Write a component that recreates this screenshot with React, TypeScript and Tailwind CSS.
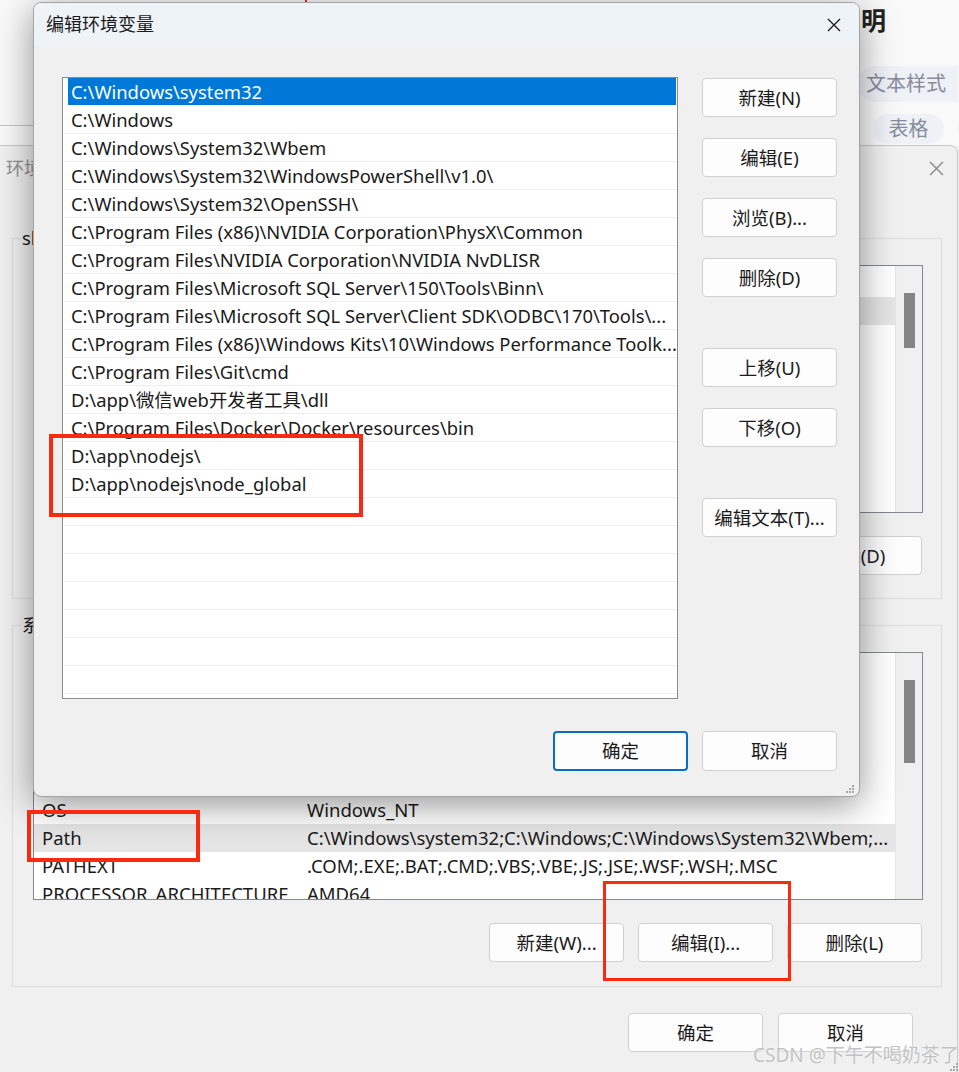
import React from "react";

const dialogPaths = [
  "C:\\Windows\\system32",
  "C:\\Windows",
  "C:\\Windows\\System32\\Wbem",
  "C:\\Windows\\System32\\WindowsPowerShell\\v1.0\\",
  "C:\\Windows\\System32\\OpenSSH\\",
  "C:\\Program Files (x86)\\NVIDIA Corporation\\PhysX\\Common",
  "C:\\Program Files\\NVIDIA Corporation\\NVIDIA NvDLISR",
  "C:\\Program Files\\Microsoft SQL Server\\150\\Tools\\Binn\\",
  "C:\\Program Files\\Microsoft SQL Server\\Client SDK\\ODBC\\170\\Tools\\...",
  "C:\\Program Files (x86)\\Windows Kits\\10\\Windows Performance Toolk...",
  "C:\\Program Files\\Git\\cmd",
  "D:\\app\\微信web开发者工具\\dll",
  "C:\\Program Files\\Docker\\Docker\\resources\\bin",
  "D:\\app\\nodejs\\",
  "D:\\app\\nodejs\\node_global",
];

const userVars = [
  { name: "OneDrive", value: "C:\\Users\\shao\\OneDrive" },
  { name: "Path", value: "C:\\Users\\shao\\AppData" },
  { name: "TEMP", value: "C:\\Users\\shao\\AppData" },
  { name: "TMP", value: "C:\\Users\\shao\\AppData" },
];

const systemVars = [
  { name: "ComSpec", value: "C:\\Windows\\system32\\cmd.exe" },
  { name: "DriverData", value: "C:\\Windows\\System32\\Drivers" },
  { name: "JAVA_HOME", value: "D:\\app\\jdk" },
  { name: "NUMBER_OF_PROCESSORS", value: "16" },
  { name: "OS", value: "Windows_NT" },
  { name: "Path", value: "C:\\Windows\\system32;C:\\Windows;C:\\Windows\\System32\\Wbem;..." },
  { name: "PATHEXT", value: ".COM;.EXE;.BAT;.CMD;.VBS;.VBE;.JS;.JSE;.WSF;.WSH;.MSC" },
  { name: "PROCESSOR_ARCHITECTURE", value: "AMD64" },
];

const CloseX = ({ color, size }: { color: string; size: number }) => (
  <svg width={size} height={size} viewBox="0 0 14 14">
    <path d="M1 1 L13 13 M13 1 L1 13" stroke={color} strokeWidth="1.3" fill="none" />
  </svg>
);

const Grip = () => (
  <svg width="10" height="10" viewBox="0 0 10 10" fill="#a8a8a8">
    <rect x="7" y="1" width="2" height="2" />
    <rect x="4" y="4" width="2" height="2" />
    <rect x="7" y="4" width="2" height="2" />
    <rect x="1" y="7" width="2" height="2" />
    <rect x="4" y="7" width="2" height="2" />
    <rect x="7" y="7" width="2" height="2" />
  </svg>
);

const Btn = ({ label, primary, className = "" }: { label: string; primary?: boolean; className?: string }) => (
  <div
    className={`flex h-[39px] w-[135px] shrink-0 items-center justify-center rounded-[4px] bg-[#fdfdfd] text-[18.5px] text-[#1b1b1b] ${
      primary ? "border-2 border-[#0a6cc4]" : "border border-[#d0d0d0]"
    } ${className}`}
  >
    {label}
  </div>
);

const VarList = ({
  rows,
  selected,
  thumbH,
}: {
  rows: { name: string; value: string }[];
  selected: number;
  thumbH: string;
}) => (
  <div className="flex h-[248px] w-[890px] overflow-hidden border border-[#828790] bg-white">
    <div className="flex min-w-0 flex-1 flex-col">
      <div className="flex h-[31px] shrink-0 items-center text-[18.5px] text-[#333]">
        <span className="w-[273px] pl-[8px]">变量</span>
        <span>值</span>
      </div>
      {rows.map((r, i) => (
        <div
          key={i}
          className={`flex h-[28px] shrink-0 items-center whitespace-nowrap text-[18.5px] ${
            i === selected ? "bg-[#e5e5e5]" : ""
          }`}
        >
          <span className="w-[273px] shrink-0 overflow-hidden pl-[8px]">{r.name}</span>
          <span className="overflow-hidden">{r.value}</span>
        </div>
      ))}
    </div>
    <div className="flex w-[27px] shrink-0 justify-center border-l border-[#e6e6e6] bg-[#f0f0f0] pt-[27px]">
      <div className={`w-[11px] bg-[#858585] ${thumbH}`} />
    </div>
  </div>
);

export default function App() {
  return (
    <div className="relative h-[1072px] w-[959px] overflow-hidden bg-[#f0f0f0] font-['Noto_Sans','Noto_Sans_CJK_SC',sans-serif] text-[#1a1a1a]">
      {/* web page behind */}
      <div className="flex h-[146px] bg-[#f9f9f9]">
        <div className="flex w-[858px] shrink-0 flex-col">
          <div className="ml-[305px] h-[5px] w-[2px] bg-[#e8281c]" />
          <div className="mt-[120px] h-px w-[60px] bg-[#c4c4c4]" />
        </div>
        <div className="flex shrink-0 flex-col">
          <div className="ml-[3px] mt-[4px] text-[25px] font-bold leading-[32px] text-[#222]">明</div>
          <div className="mt-[30px] flex h-[36px] w-[100px] items-center rounded-l-full bg-[#eef1f6] pl-[8px] text-[20px] text-[#878b9c]">
            文本样式
          </div>
          <div className="mt-[12px] flex gap-[14px] pl-[15px]">
            <div className="flex h-[30px] w-[71px] items-center justify-center rounded-full bg-[#eef1f6] text-[20px] text-[#878b9c]">
              表格
            </div>
            <div className="h-[30px] w-[20px] rounded-l-full bg-[#eef1f6]" />
          </div>
        </div>
      </div>

      {/* background window: 环境变量 */}
      <div className="absolute left-[-20px] top-[145px] h-[960px] w-[978px] rounded-tr-[8px] border border-[#c8c8c8] bg-[#f0f0f0]">
        <div className="flex h-[45px] items-center justify-between pl-[25px] pr-[13px]">
          <span className="text-[18px] text-[#8e8e8e]">环境变量</span>
          <CloseX color="#8a8a8a" size={15} />
        </div>
        <div className="flex flex-col pl-[31px] pt-[47px]">
          <div className="relative flex h-[361px] w-[930px] flex-col items-start border border-[#dcdcdc] pl-[20px] pt-[26px]">
            <span className="absolute left-[8px] top-[-13px] bg-[#f0f0f0] px-[1px] text-[18.5px] leading-[24px]">shao 的用户变量</span>
            <VarList rows={userVars} selected={0} thumbH="h-[55px]" />
            <div className="mt-[23px] flex w-[889px] justify-end gap-[14px]">
              <Btn label="新建(N)..." className="w-[134px]" />
              <Btn label="编辑(E)..." className="w-[134px]" />
              <Btn label="删除(D)" className="w-[134px]" />
            </div>
          </div>
          <div className="relative mt-[26px] flex h-[362px] w-[930px] flex-col items-start border border-[#dcdcdc] pl-[20px] pt-[26px]">
            <span className="absolute left-[8px] top-[-13px] bg-[#f0f0f0] px-[1px] text-[18.5px] leading-[24px]">系统变量</span>
            <VarList rows={systemVars} selected={5} thumbH="h-[83px]" />
            <div className="mt-[23px] flex w-[889px] justify-end gap-[14px]">
              <Btn label="新建(W)..." className="w-[134px]" />
              <Btn label="编辑(I)..." className="w-[134px]" />
              <Btn label="删除(L)" className="w-[134px]" />
            </div>
          </div>
          <div className="mt-[26px] flex w-[901px] justify-end gap-[15px]">
            <Btn label="确定" className="w-[134px]" />
            <Btn label="取消" className="w-[134px]" />
          </div>
        </div>
      </div>

      {/* foreground dialog: 编辑环境变量 */}
      <div className="absolute left-[33px] top-[2px] flex h-[795px] w-[827px] flex-col overflow-hidden rounded-[8px] border border-[#a3a3a3] bg-[#f0f0f0] shadow-[0_8px_36px_rgba(0,0,0,0.42)]">
        <div className="flex h-[43px] shrink-0 items-center justify-between bg-[#eef3f8] pl-[12px] pr-[18px]">
          <span className="text-[18px]">编辑环境变量</span>
          <CloseX color="#1a1a1a" size={14} />
        </div>
        <div className="flex flex-1 flex-col pl-[28px] pr-[22px] pt-[31px]">
          <div className="flex gap-[24px]">
            <div className="flex h-[622px] w-[616px] flex-col overflow-hidden border border-[#8c8c8c] bg-white">
              {Array.from({ length: 22 }).map((_, i) => {
                const text = dialogPaths[i];
                if (i === 0) {
                  return (
                    <div key={i} className="flex h-[28px] shrink-0 pb-px pl-[5px] pr-px">
                      <div className="flex flex-1 items-center whitespace-nowrap bg-[#0078d7] pl-[3px] text-[18.4px] text-white">
                        {text}
                      </div>
                    </div>
                  );
                }
                return (
                  <div
                    key={i}
                    className="ml-px flex h-[28px] shrink-0 items-center overflow-hidden whitespace-nowrap border-b border-[#ededed] pl-[7px] text-[18.4px]"
                  >
                    {text ?? ""}
                  </div>
                );
              })}
            </div>
            <div className="flex flex-col pt-[1px]">
              <Btn label="新建(N)" />
              <Btn label="编辑(E)" className="mt-[21px]" />
              <Btn label="浏览(B)..." className="mt-[21px]" />
              <Btn label="删除(D)" className="mt-[21px]" />
              <Btn label="上移(U)" className="mt-[51px]" />
              <Btn label="下移(O)" className="mt-[21px]" />
              <Btn label="编辑文本(T)..." className="mt-[51px]" />
            </div>
          </div>
          <div className="mt-[32px] flex justify-end gap-[14px]">
            <Btn label="确定" primary className="h-[40px]" />
            <Btn label="取消" className="h-[40px]" />
          </div>
          <div className="mt-auto flex justify-end pb-[2px]">
            <div className="mr-[-18px]">
              <Grip />
            </div>
          </div>
        </div>
      </div>

      {/* red annotation boxes */}
      <div className="absolute left-[49px] top-[434px] h-[83px] w-[314px] border-4 border-[#fa2a10]" />
      <div className="absolute left-[27px] top-[810px] h-[52px] w-[173px] border-4 border-[#fa2a10]" />
      <div className="absolute left-[603px] top-[881px] h-[100px] w-[188px] border-[3px] border-[#fa2a10]" />

      {/* watermark */}
      <div className="absolute left-[753px] top-[1041px] text-[19px] text-[#c2c2c2] [text-shadow:0_0_2px_#ffffff]">
        CSDN @下午不喝奶茶了
      </div>
      <div className="absolute bottom-0 right-0">
        <Grip />
      </div>
    </div>
  );
}
